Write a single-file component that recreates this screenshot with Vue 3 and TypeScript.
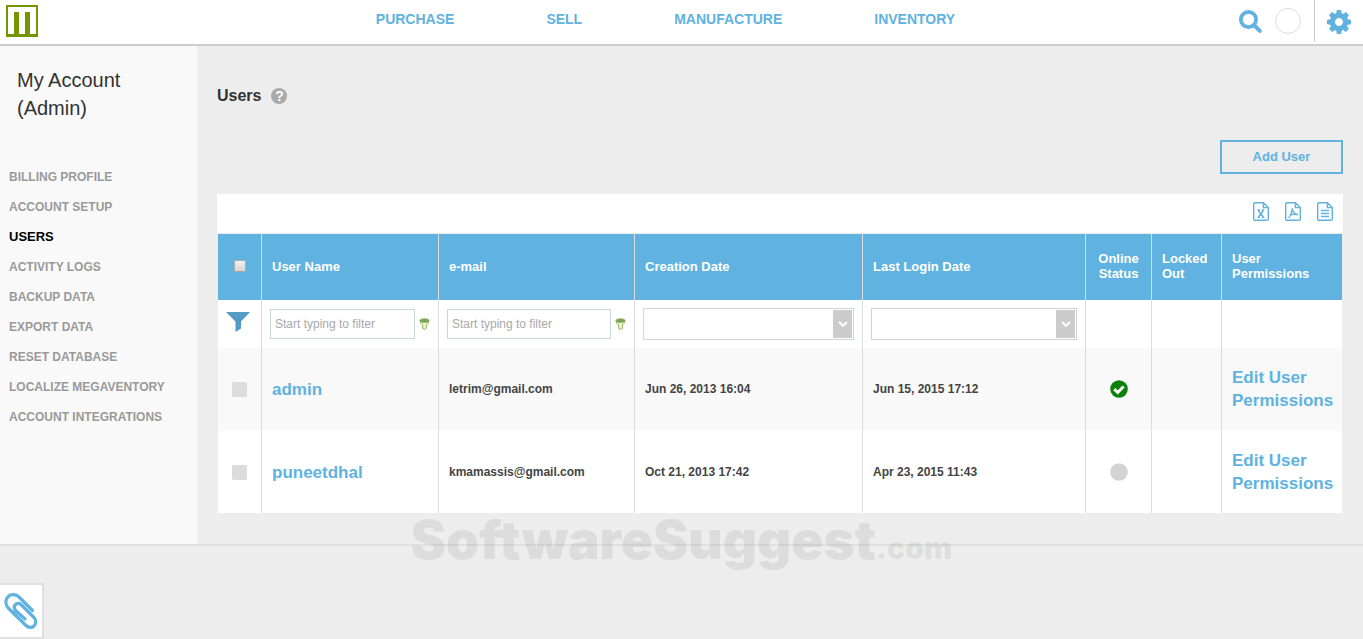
<script setup lang="ts">
import { ref } from 'vue'

interface UserRow {
  name: string
  email: string
  created: string
  lastLogin: string
  online: boolean
}

const modules = ['PURCHASE', 'SELL', 'MANUFACTURE', 'INVENTORY']

const sections = [
  'BILLING PROFILE',
  'ACCOUNT SETUP',
  'USERS',
  'ACTIVITY LOGS',
  'BACKUP DATA',
  'EXPORT DATA',
  'RESET DATABASE',
  'LOCALIZE MEGAVENTORY',
  'ACCOUNT INTEGRATIONS',
]
const activeSection = 'USERS'

const users: UserRow[] = [
  { name: 'admin', email: 'letrim@gmail.com', created: 'Jun 26, 2013 16:04', lastLogin: 'Jun 15, 2015 17:12', online: true },
  { name: 'puneetdhal', email: 'kmamassis@gmail.com', created: 'Oct 21, 2013 17:42', lastLogin: 'Apr 23, 2015 11:43', online: false },
]

const nameFilter = ref('')
const emailFilter = ref('')
const selected = ref<string[]>([])
</script>

<template>
  <div class="page">
    <header class="topbar">
      <a class="logo" href="#" aria-label="Home">
        <svg width="32" height="32" viewBox="0 0 32 32">
          <path d="M0 0h32v32H0z M2 2v27h6V7h5v22h6V7h5v22h6V2z" fill="#739600" fill-rule="evenodd" />
        </svg>
      </a>
      <nav class="modules" aria-label="Modules">
        <a v-for="m in modules" :key="m" href="#">{{ m }}</a>
      </nav>
      <div class="tools">
        <button class="icon-button" type="button" aria-label="Search">
          <svg width="24" height="24" viewBox="0 0 24 24" fill="none" stroke="#60b2e0">
            <circle cx="9.500" cy="9.500" r="7.600" stroke-width="3.800" />
            <path d="M15 15 20.800 20.800" stroke-width="4" stroke-linecap="round" />
          </svg>
        </button>
        <button class="avatar" type="button" aria-label="Profile"></button>
        <div class="settings">
          <button class="icon-button" type="button" aria-label="Settings">
            <svg width="24" height="24" viewBox="128 128 1536 1536" fill="#60b2e0">
              <path d="M1152 896q0-106-75-181t-181-75-181 75-75 181 75 181 181 75 181-75 75-181zm512-109v222q0 12-8 23t-20 13l-185 28q-19 54-39 91 35 50 107 138 10 12 10 25t-9 23q-27 37-99 108t-94 71q-12 0-26-9l-138-108q-44 23-91 38-16 136-29 186-7 28-36 28h-222q-14 0-24.5-8.5t-11.5-21.5l-28-184q-49-16-90-37l-141 107q-10 9-25 9-14 0-25-11-126-114-165-168-7-10-7-23 0-12 8-23 15-21 51-66.5t54-70.5q-27-50-41-99l-183-27q-13-2-21-12.5t-8-23.5v-222q0-12 8-23t19-13l186-28q14-46 39-92-40-57-107-138-10-12-10-24 0-10 9-23 26-36 98.5-107.5t94.5-71.5q13 0 26 10l138 107q44-23 91-38 16-136 29-186 7-28 36-28h222q14 0 24.5 8.5t11.5 21.5l28 184q49 16 90 37l142-107q9-9 24-9 13 0 25 10 129 119 165 170 7 8 7 22 0 12-8 23-15 21-51 66.5t-54 70.5q26 50 41 98l183 28q13 2 21 12.5t8 23.5z" />
            </svg>
          </button>
        </div>
      </div>
    </header>

    <div class="layout">
      <aside class="sidebar">
        <h2>My Account<br />(Admin)</h2>
        <nav aria-label="Account">
          <a v-for="s in sections" :key="s" href="#" :class="{ active: s === activeSection }">{{ s }}</a>
        </nav>
      </aside>

      <main class="content">
        <div class="heading">
          <h1>Users</h1>
          <button class="help" type="button" aria-label="Help">?</button>
        </div>
        <button class="add" type="button">Add User</button>

        <section class="panel">
          <div class="exports">
            <button class="icon-button" type="button" aria-label="Export to Excel">
              <svg width="16" height="19" viewBox="0 0 16 19" class="file">
                <path d="M1.600.7H10.400L15.300 5.600V16.900Q15.300 18.300 13.900 18.300H2.100Q.7 18.300.7 16.900V1.600Q.7.7 1.600.7z M10.400.7V5.600H15.300" />
                <path d="M5.300 8.500 10.200 15M10.400 8.500 5.500 15M4.400 8h2.600M8.800 8h2.600M4.400 15.400h2.600M8.800 15.400h2.600" />
              </svg>
            </button>
            <button class="icon-button" type="button" aria-label="Export to PDF">
              <svg width="16" height="19" viewBox="0 0 16 19" class="file">
                <path d="M1.600.7H10.400L15.300 5.600V16.900Q15.300 18.300 13.900 18.300H2.100Q.7 18.300.7 16.900V1.600Q.7.7 1.600.7z M10.400.7V5.600H15.300" />
                <path d="M7.200 6.200C7.300 9 7 11 5.300 13.500 4.500 14.800 3.600 15.500 3.200 15.300M7.200 6.500C7.500 9.500 9 11.600 13 13M4.800 13.400C7 12.100 9.500 12 12.800 12.200" />
              </svg>
            </button>
            <button class="icon-button" type="button" aria-label="Export to text">
              <svg width="16" height="19" viewBox="0 0 16 19" class="file">
                <path d="M1.600.7H10.400L15.300 5.600V16.900Q15.300 18.300 13.900 18.300H2.100Q.7 18.300.7 16.900V1.600Q.7.7 1.600.7z M10.400.7V5.600H15.300" />
                <path d="M4 8.500h8M4 11.500h8M4 14.500h8" />
              </svg>
            </button>
          </div>

          <table>
            <colgroup>
              <col class="c-check" />
              <col class="c-name" />
              <col class="c-email" />
              <col class="c-created" />
              <col class="c-login" />
              <col class="c-online" />
              <col class="c-locked" />
              <col class="c-perm" />
            </colgroup>
            <thead>
              <tr>
                <th class="center"><input class="check-all" type="checkbox" aria-label="Select all users" /></th>
                <th>User Name</th>
                <th>e-mail</th>
                <th>Creation Date</th>
                <th>Last Login Date</th>
                <th class="center">Online Status</th>
                <th>Locked Out</th>
                <th>User Permissions</th>
              </tr>
            </thead>
            <tbody>
              <tr class="filters">
                <td>
                  <button class="icon-button" type="button" aria-label="Filter">
                    <svg width="24" height="20" viewBox="0 0 24 20"><path d="M0 0H24L15 9.500V16.500L9.500 20V9.500z" fill="#549cc6" /></svg>
                  </button>
                </td>
                <td>
                  <div class="filter">
                    <input v-model="nameFilter" type="text" placeholder="Start typing to filter" aria-label="Filter by user name" />
                    <button class="icon-button" type="button" aria-label="User name filter options">
                      <svg width="11" height="12" viewBox="0 0 11 12">
                        <path d="M1 2.800Q1.500 5.500 3.700 7V10.500L5.500 11.500 7.300 10.500V7Q9.500 5.500 10 2.800z" fill="#f3f8d4" stroke="#8fae55" />
                        <ellipse cx="5.500" cy="2.600" rx="4.500" ry="1.800" fill="#76a360" stroke="#8fae55" />
                      </svg>
                    </button>
                  </div>
                </td>
                <td>
                  <div class="filter">
                    <input v-model="emailFilter" type="text" placeholder="Start typing to filter" aria-label="Filter by e-mail" />
                    <button class="icon-button" type="button" aria-label="E-mail filter options">
                      <svg width="11" height="12" viewBox="0 0 11 12">
                        <path d="M1 2.800Q1.500 5.500 3.700 7V10.500L5.500 11.500 7.300 10.500V7Q9.500 5.500 10 2.800z" fill="#f3f8d4" stroke="#8fae55" />
                        <ellipse cx="5.500" cy="2.600" rx="4.500" ry="1.800" fill="#76a360" stroke="#8fae55" />
                      </svg>
                    </button>
                  </div>
                </td>
                <td v-for="label in ['Filter by creation date', 'Filter by last login date']" :key="label">
                  <div class="picker">
                    <select :aria-label="label"><option value=""></option></select>
                    <span class="arrow">
                      <svg width="10" height="6" viewBox="0 0 10 6"><path d="M1 1 5 4.800 9 1" fill="none" stroke="#fff" stroke-width="2" /></svg>
                    </span>
                  </div>
                </td>
                <td></td>
                <td></td>
                <td></td>
              </tr>
              <tr v-for="u in users" :key="u.name" class="user">
                <td class="center"><input v-model="selected" class="check" type="checkbox" :value="u.name" :aria-label="`Select ${u.name}`" /></td>
                <td><a href="#">{{ u.name }}</a></td>
                <td>{{ u.email }}</td>
                <td>{{ u.created }}</td>
                <td>{{ u.lastLogin }}</td>
                <td class="center">
                  <svg v-if="u.online" width="18" height="18" viewBox="0 0 18 18" role="img" aria-label="Online">
                    <circle cx="9" cy="9" r="8.800" fill="#0b800b" />
                    <path d="M4.200 9.200 7.700 12.500 13.600 6.500" fill="none" stroke="#fff" stroke-width="3" />
                  </svg>
                  <svg v-else width="18" height="18" viewBox="0 0 18 18" role="img" aria-label="Offline">
                    <circle cx="9" cy="9" r="8.800" fill="#d3d3d6" />
                  </svg>
                </td>
                <td></td>
                <td><a href="#">Edit User Permissions</a></td>
              </tr>
            </tbody>
          </table>
        </section>
      </main>

      <div class="watermark">SoftwareSuggest<span>.com</span></div>
    </div>

    <button class="attach" type="button" aria-label="Attachments">
      <svg width="34" height="38" viewBox="4 592 34 38" fill="none" stroke="#60b2e0" stroke-width="3.200" stroke-linecap="round" stroke-linejoin="round">
        <path d="M32.500 610.500 19 597C16 594 11 593.700 8.200 596.500 5 599.500 5 604.500 8.200 608L26 625.500C28.500 628 32 628 34 626 36.200 623.500 36.200 620 34 617.500L21.500 605C19.500 603 17 603 15.500 604.500 14 606 14 608.500 15.500 610.500L25 619" />
      </svg>
    </button>
  </div>
</template>

<style>
body {
  margin: 0;
  background: #ededed;
}
</style>

<style scoped>
.page {
  min-height: 100vh;
  font-family: "Liberation Sans", Arial, sans-serif;
  color: #444;
}

.page *,
.page {
  box-sizing: border-box;
}

a {
  color: #60b2e0;
  text-decoration: none;
}

button {
  font-family: inherit;
  cursor: pointer;
}

svg {
  display: block;
}

.icon-button {
  display: block;
  padding: 0;
  border: 0;
  background: none;
}

.topbar {
  display: grid;
  grid-template-columns: 1fr auto 1fr;
  height: 46px;
  background: #fff;
  border-bottom: 2px solid #ccc;
}

.logo {
  justify-self: start;
  margin: 5px 0 0 6px;
}

.modules {
  display: flex;
  gap: 92px;
  padding: 11px 32px 0 0;
  font-size: 14px;
  line-height: 16px;
  font-weight: bold;
}

.tools {
  display: flex;
  justify-content: flex-end;
  align-items: flex-start;
}

.tools > .icon-button {
  margin-top: 10px;
}

.avatar {
  width: 26px;
  height: 26px;
  margin: 8px 13px 0 12px;
  padding: 0;
  border: 1px solid #ddd;
  border-radius: 50%;
  background: #fff;
}

.settings {
  height: 42px;
  padding: 10px 12px 0;
  border-left: 1px solid #ccc;
}

.layout {
  position: relative;
  display: flex;
  border-bottom: 2px solid #e0e0e0;
}

.sidebar {
  flex: 0 0 197px;
  padding: 20px 9px 0;
  background: #f9f9f9;
}

.sidebar h2 {
  margin: 0 8px 40px;
  font-size: 20px;
  line-height: 28px;
  font-weight: normal;
  color: #333;
}

.sidebar nav {
  display: flex;
  flex-direction: column;
  font-size: 12px;
  line-height: 30px;
  font-weight: bold;
  white-space: nowrap;
}

.sidebar nav a {
  color: #999;
}

.sidebar nav .active {
  font-size: 13px;
  color: #000;
}

.content {
  flex: 1;
  min-width: 0;
  display: flex;
  flex-direction: column;
  padding: 38px 20px 31px;
}

.heading {
  display: flex;
  align-items: center;
  gap: 10px;
  height: 24px;
}

.heading h1 {
  margin: 0;
  font-size: 16px;
  line-height: 24px;
  color: #333;
}

.help {
  width: 16px;
  height: 16px;
  padding: 0;
  border: 0;
  border-radius: 50%;
  background: #aaa;
  color: #fff;
  font-size: 14px;
  line-height: 16px;
  font-weight: bold;
}

.add {
  align-self: flex-end;
  width: 123px;
  height: 34px;
  margin: 32px 0 20px;
  padding: 0 0 2px;
  border: 2px solid #60b2e0;
  background: transparent;
  color: #60b2e0;
  font-size: 13px;
  font-weight: bold;
}

.exports {
  display: flex;
  align-items: flex-start;
  justify-content: flex-end;
  gap: 16px;
  height: 39px;
  padding: 8px 10px 0;
  background: #fff;
}

.file {
  fill: none;
  stroke: #60b2e0;
  stroke-width: 1.4px;
}

table {
  width: calc(100% - 2px);
  margin: 1px 1px 0;
  border-collapse: separate;
  border-spacing: 0;
  table-layout: fixed;
  background: #fff;
  font-size: 12px;
  font-weight: bold;
}

.c-check { width: 44px; }
.c-name { width: 177px; }
.c-email { width: 196px; }
.c-created { width: 228px; }
.c-login { width: 223px; }
.c-online { width: 66px; }
.c-locked { width: 70px; }
.c-perm { width: 120px; }

th,
td {
  padding: 0 10px;
  border-right: 1px solid #dcdcdc;
  text-align: left;
  vertical-align: middle;
}

th:last-child,
td:last-child {
  border-right: 0;
}

th,
th.center {
  height: 66px;
  padding-bottom: 2px;
  background: #60b2e0;
  color: #fff;
  font-size: 13px;
  line-height: 15px;
}

.center {
  padding: 0 8px;
  text-align: center;
}

.center svg,
.center input {
  margin: 0 auto;
}

.check-all,
.check {
  display: block;
  appearance: none;
  background: #dcdcdc;
}

.check-all {
  width: 12px;
  height: 12px;
  border: 1px solid #aaa;
  background: linear-gradient(#eee, #d8d8d8);
}

.check {
  width: 15px;
  height: 15px;
  border-radius: 2px;
}

.check-all:checked,
.check:checked {
  background: #549cc6;
}

.filters td {
  height: 48px;
  padding: 0 8px;
}

.filters td:first-child {
  padding-bottom: 4px;
}

.filter {
  display: flex;
  align-items: center;
  gap: 4px;
}

.filter input {
  flex: 1;
  min-width: 0;
  height: 30px;
  padding: 0 4px;
  border: 1px solid #c8d6df;
  background: #fff;
  font-family: inherit;
  font-size: 12px;
  color: #444;
}

.filter input::placeholder {
  color: #a9a9a9;
  opacity: 1;
}

.picker {
  position: relative;
}

.picker select {
  display: block;
  width: 100%;
  height: 32px;
  padding: 0 24px 0 4px;
  appearance: none;
  border: 1px solid #c8d6df;
  border-radius: 0;
  background: #fff;
  font-family: inherit;
  font-size: 12px;
}

.arrow {
  position: absolute;
  top: 2px;
  right: 2px;
  bottom: 2px;
  width: 19px;
  display: flex;
  align-items: center;
  justify-content: center;
  background: #ccc;
  pointer-events: none;
}

.user td {
  height: 83px;
  border-bottom: 1px solid #f9f9f9;
}

.user:last-child td {
  height: 82px;
  border-bottom: 0;
}

.user:nth-child(even) td {
  background: #f9f9f9;
}

.user a {
  font-size: 17px;
  line-height: 23px;
}

.watermark {
  position: absolute;
  right: 0;
  bottom: -36px;
  left: 0;
  text-align: center;
  font-family: Inter, "Open Sans", sans-serif;
  font-size: 53px;
  line-height: 64px;
  font-weight: 900;
  color: rgba(0, 0, 0, 0.07);
  white-space: nowrap;
  pointer-events: none;
}

.watermark span {
  font-size: 30px;
}

.attach {
  position: fixed;
  bottom: 0;
  left: 0;
  width: 44px;
  height: 56px;
  padding: 0 0 0 4px;
  border: 2px solid #e0e0e0;
  border-left: 0;
  background: #fff;
}
</style>
